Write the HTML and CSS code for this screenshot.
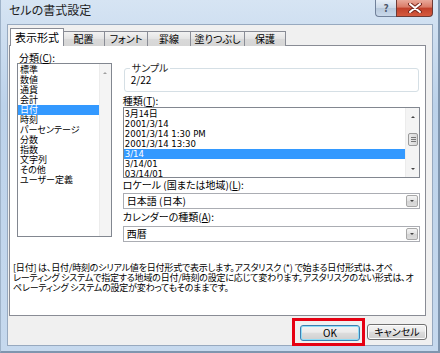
FILE: index.html
```html
<!DOCTYPE html>
<html lang="ja">
<head>
    <meta charset="UTF-8">
    <title>セルの書式設定</title>
    <link rel="stylesheet" href="styles.css">
</head>
<body>
    <div class="window">
        <div class="titlebar">
            <span class="title">セルの書式設定</span>
            <div class="caption-buttons">
                <div class="cap-help">?</div>
                <div class="cap-close">
                    <svg width="14" height="10" viewBox="0 0 14 10">
                        <path d="M2 1 L12 9 M12 1 L2 9" stroke="#7a2a20" stroke-width="4" stroke-linecap="round"/>
                        <path d="M2 1 L12 9 M12 1 L2 9" stroke="#ffffff" stroke-width="2" stroke-linecap="round"/>
                    </svg>
                </div>
            </div>
        </div>

        <div class="client">
            <div class="tabs">
                <div class="tab active">表示形式</div>
                <div class="tab">配置</div>
                <div class="tab">フォント</div>
                <div class="tab">罫線</div>
                <div class="tab">塗りつぶし</div>
                <div class="tab">保護</div>
            </div>

            <div class="panel">
                <div class="panel-top">
                    <div class="category">
                        <div class="label">分類(<u>C</u>):</div>
                        <div class="listbox cat-list">
                            <ul class="items">
                                <li>標準</li>
                                <li>数値</li>
                                <li>通貨</li>
                                <li>会計</li>
                                <li class="selected">日付</li>
                                <li>時刻</li>
                                <li>パーセンテージ</li>
                                <li>分数</li>
                                <li>指数</li>
                                <li>文字列</li>
                                <li>その他</li>
                                <li>ユーザー定義</li>
                            </ul>
                            <div class="vscroll">
                                <span class="arrow up"></span>
                            </div>
                        </div>
                    </div>

                    <div class="details">
                        <fieldset class="sample">
                            <legend>サンプル</legend>
                            <div class="sample-value">2/22</div>
                        </fieldset>

                        <div class="label">種類(<u>T</u>):</div>
                        <div class="listbox type-list">
                            <ul class="items">
                                <li>3月14日</li>
                                <li>2001/3/14</li>
                                <li>2001/3/14 1:30 PM</li>
                                <li>2001/3/14 13:30</li>
                                <li class="selected">3/14</li>
                                <li>3/14/01</li>
                                <li>03/14/01</li>
                            </ul>
                            <div class="vscroll">
                                <span class="arrow up"></span>
                                <span class="thumb"></span>
                                <span class="arrow down"></span>
                            </div>
                        </div>

                        <div class="label locale-label">ロケール (国または地域)(<u>L</u>):</div>
                        <div class="combo">
                            <span class="combo-text">日本語 (日本)</span>
                            <span class="combo-btn"><span class="arrow down"></span></span>
                        </div>

                        <div class="label calendar-label">カレンダーの種類(<u>A</u>):</div>
                        <div class="combo calendar">
                            <span class="combo-text">西暦</span>
                            <span class="combo-btn"><span class="arrow down"></span></span>
                        </div>
                    </div>
                </div>

                <p class="desc">
                    <span>[日付] は、日付/時刻のシリアル値を日付形式で表示します。アスタリスク (*) で始まる日付形式は、オペ</span>
                    <span>レーティング システムで指定する地域の日付/時刻の設定に応じて変わります。アスタリスクのない形式は、オ</span>
                    <span>ペレーティング システムの設定が変わってもそのままです。</span>
                </p>
            </div>

            <div class="buttons">
                <div class="highlight">
                    <button class="btn default">OK</button>
                </div>
                <button class="btn">キャンセル</button>
            </div>
        </div>
    </div>
</body>
</html>
```

FILE: styles.css
```css
:root {
    --frame: #c3d6ec;
    --border: #898c95;
    --select: #3399ff;
    --face: #f0f0f0;
}

* {
    margin: 0;
    padding: 0;
    box-sizing: border-box;
}

body {
    font-family: "Noto Sans CJK JP", "Noto Sans", sans-serif;
    font-size: 10px;
    line-height: 10px;
    font-feature-settings: "palt";
    color: #000;
    background: #ffffff;
}

.window {
    width: 440px;
    height: 353px;
    background: linear-gradient(#d6e4f3, #bcd2ea 30%, #c6d9ee);
    border-left: 1px solid #9fb3c9;
    border-right: 2px solid #7f95ae;
    border-bottom: 2px solid #7f95ae;
    padding: 0 5px 5px 6px;
}

.titlebar {
    height: 24px;
    display: flex;
    align-items: flex-start;
}

.title {
    font-size: 12px;
    line-height: 12px;
    padding: 4px 0 0 2px;
    color: #1e1e1e;
}

.caption-buttons {
    margin-left: auto;
    display: flex;
}

.cap-help {
    width: 21px;
    height: 17px;
    border: 1px solid #71819a;
    border-top: none;
    border-right: none;
    border-bottom-left-radius: 4px;
    background: linear-gradient(#e6eef7, #cbd8e7 50%, #b7c8db 51%, #c9d8ea);
    color: #4a5567;
    font-size: 10px;
    line-height: 15px;
    text-align: center;
    font-weight: bold;
}

.cap-close {
    width: 37px;
    height: 17px;
    border: 1px solid #6d3a35;
    border-top: none;
    border-bottom-right-radius: 4px;
    background: linear-gradient(#e9a99a, #d97a66 45%, #c0402a 50%, #d55a3e);
    display: flex;
    align-items: center;
    justify-content: center;
}

.client {
    height: 322px;
    background: var(--face);
    border: 1px solid #97a9bf;
    padding: 3px 5px 0 1px;
}

.tabs {
    display: flex;
    align-items: flex-end;
    height: 18px;
    margin-bottom: -1px;
    padding-left: 1px;
    position: relative;
}

.tab {
    height: 15px;
    border: 1px solid var(--border);
    border-bottom: none;
    border-left: none;
    background: linear-gradient(#f2f2f2, #e3e3e3 50%, #d9d9d9 51%, #d6d6d6);
    line-height: 14px;
    text-align: center;
    white-space: nowrap;
}

.tab:nth-child(2) { width: 42px; }
.tab:nth-child(3) { width: 43px; }
.tab:nth-child(4) { width: 43px; }
.tab:nth-child(5) { width: 54px; }
.tab:nth-child(6) { width: 41px; }

.tab.active {
    width: 54px;
    height: 18px;
    border-left: 1px solid var(--border);
    border-right: 1px solid var(--border);
    background: #fff;
    font-size: 11px;
    line-height: 17px;
    margin-right: -1px;
    position: relative;
    z-index: 1;
}

.panel {
    height: 271px;
    margin-right: 1px;
    background: #fff;
    border: 1px solid var(--border);
    padding: 6px 5px 0 3px;
}

.panel-top {
    display: flex;
    gap: 11px;
    padding-left: 4px;
}

.label {
    height: 11px;
    line-height: 11px;
    padding-left: 2px;
}

.label u {
    text-decoration: underline;
    text-underline-offset: 1px;
}

.listbox {
    display: flex;
    border: 1px solid #828790;
    background: #fff;
    overflow: hidden;
}

.items {
    list-style: none;
    flex: 1;
    font-size: 9px;
}

.items li {
    height: 10px;
    line-height: 10px;
    padding-left: 2px;
    white-space: nowrap;
}

.items li.selected {
    background: var(--select);
    color: #fff;
}

.category {
    width: 95px;
}

.cat-list {
    height: 174px;
}

.cat-list .items {
    padding-top: 1px;
}

.vscroll {
    width: 12px;
    background: #f4f4f4;
    border-left: 1px solid #ececec;
    display: flex;
    flex-direction: column;
    align-items: center;
}

.arrow {
    width: 0;
    height: 0;
    border-left: 2px solid transparent;
    border-right: 2px solid transparent;
}

.arrow.up {
    border-bottom: 2px solid #444;
    margin-top: 8px;
}

.arrow.down {
    border-top: 2px solid #444;
}

.cat-list .arrow.up {
    border-bottom-color: #a0a0a0;
}

.type-list .arrow.down {
    margin-top: auto;
    margin-bottom: 7px;
}

.thumb {
    width: 10px;
    height: 13px;
    margin-top: 15px;
    border: 1px solid #9a9a9a;
    border-radius: 2px;
    background:
        linear-gradient(#777, #777) 2px 3px / 5px 1px no-repeat,
        linear-gradient(#777, #777) 2px 5px / 5px 1px no-repeat,
        linear-gradient(#777, #777) 2px 7px / 5px 1px no-repeat,
        linear-gradient(90deg, #eaeaea, #d8d8d8);
}

.details {
    width: 298px;
}

.sample {
    margin: 11px 1px 0 1px;
    border: 1px solid #d5dfe5;
    border-radius: 3px;
    padding: 2px 6px 6px 6px;
    height: 29px;
}

.sample legend {
    padding: 0 2px;
    margin-left: -1px;
    line-height: 10px;
    color: #222;
}

.sample-value {
    line-height: 10px;
}

.details > .label {
    margin-top: 3px;
    padding-left: 0;
}

.type-list {
    height: 71px;
    margin-top: 1px;
}

.type-list .items li {
    padding-left: 1px;
    font-family: "DejaVu Sans Condensed", "Noto Sans CJK JP", sans-serif;
    font-size: 9.5px;
}

.type-list .items li:first-child {
    font-family: "Noto Sans CJK JP", sans-serif;
    font-size: 9px;
}

.type-list .items {
    padding-top: 1px;
}

.type-list .vscroll {
    width: 14px;
}

.details > .locale-label {
    margin-top: 1px;
}

.combo {
    height: 16px;
    margin-top: 3px;
    border: 1px solid #abadb3;
    display: flex;
    align-items: center;
    padding: 0 1px 0 3px;
    background: #fff;
}

.combo-text {
    flex: 1;
}

.combo-btn {
    width: 12px;
    height: 12px;
    border: 1px solid #a8a8a8;
    border-radius: 2px;
    background: linear-gradient(#f4f4f4, #e2e2e2 50%, #d4d4d4 51%, #dcdcdc);
    display: flex;
    align-items: center;
    justify-content: center;
}

.details > .calendar-label {
    margin-top: 2px;
}

.combo.calendar {
    margin-top: 4px;
}

.desc {
    margin-top: 21px;
    font-size: 9px;
    line-height: 10px;
    letter-spacing: -0.2px;
}

.desc span {
    display: block;
    white-space: nowrap;
}

.buttons {
    display: flex;
    justify-content: flex-end;
    align-items: center;
    margin-top: 2px;
    gap: 2px;
}

.highlight {
    border: 3px solid #e60012;
    padding: 4px 2px 2px 5px;
}

.btn {
    width: 60px;
    height: 16px;
    font-family: "Noto Sans CJK JP", "Noto Sans", sans-serif;
    font-size: 10px;
    line-height: 14px;
    font-feature-settings: "palt";
    color: #000;
    border: 1px solid #707070;
    border-radius: 3px;
    background: linear-gradient(#f2f2f2, #ebebeb 45%, #dddddd 50%, #cfcfcf);
    box-shadow: inset 0 0 0 1px #fcfcfc;
}

.btn.default {
    border-color: #3c7fb1;
    box-shadow: inset 0 0 0 1px #8fdcf7;
}
```
